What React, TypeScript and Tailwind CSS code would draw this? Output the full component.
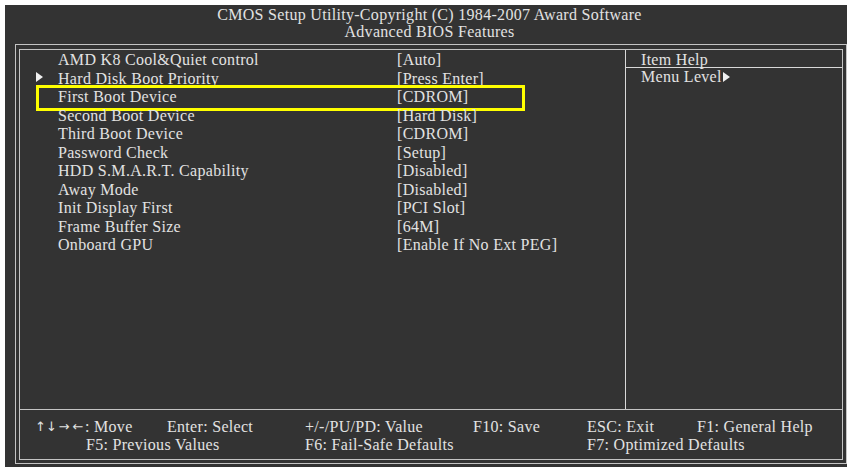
import React from "react";

const rows: { name: string; value: string; sub?: boolean; sel?: boolean }[] = [
  { name: "AMD K8 Cool&Quiet control", value: "[Auto]" },
  { name: "Hard Disk Boot Priority", value: "[Press Enter]", sub: true },
  { name: "First Boot Device", value: "[CDROM]", sel: true },
  { name: "Second Boot Device", value: "[Hard Disk]" },
  { name: "Third Boot Device", value: "[CDROM]" },
  { name: "Password Check", value: "[Setup]" },
  { name: "HDD S.M.A.R.T. Capability", value: "[Disabled]" },
  { name: "Away Mode", value: "[Disabled]" },
  { name: "Init Display First", value: "[PCI Slot]" },
  { name: "Frame Buffer Size", value: "[64M]" },
  { name: "Onboard GPU", value: "[Enable If No Ext PEG]" },
];

function Tri() {
  return (
    <svg width="7" height="10" viewBox="0 0 7 10" className="block">
      <polygon points="0,0 7,5 0,10" fill="#f0f0f0" />
    </svg>
  );
}

export default function App() {
  return (
    <div className="w-[851px] h-[467px] bg-white pt-[5px] pl-[5px] pr-[4px] font-['Liberation_Serif',serif] text-[16px] tracking-[0.3px] text-[#e2e2e2]">
      <div className="h-[462px] bg-[#333333] flex flex-col">
        <div className="pt-[1px] pl-[7px] text-center leading-[17px]">
          <div>CMOS Setup Utility-Copyright (C) 1984-2007 Award Software</div>
          <div>Advanced BIOS Features</div>
        </div>
        <div className="ml-[10px] mt-[4px] w-[832px] h-[420px] border border-[#c4c4c4] pt-[4px] pl-[3px] pr-[3px] pb-[3px]">
          <div className="h-full border border-[#c4c4c4] flex flex-col">
            <div className="h-[360px] border-b border-[#c4c4c4] flex">
              <div className="w-[606px] border-r border-[#d8d8d8] pt-[1px]">
                {rows.map((r) => (
                  <div key={r.name} className="relative flex h-[18.5px] leading-[18.5px] whitespace-nowrap">
                    <div className="w-[38px] pl-[16px] pt-[2.5px]">{r.sub ? <Tri /> : null}</div>
                    <div className="w-[339px]">{r.name}</div>
                    <div>{r.value}</div>
                    {r.sel ? (
                      <div className="absolute left-[16px] top-[-3px] w-[489px] h-[26px] border-[3px] border-[#ffff00]" />
                    ) : null}
                  </div>
                ))}
              </div>
              <div className="flex-1 flex flex-col">
                <div className="h-[18px] border-b border-[#d8d8d8] pt-[2px] pl-[15px] leading-[15px]">Item Help</div>
                <div className="pl-[15px] leading-[18.5px] flex items-center whitespace-nowrap">
                  <span>Menu Level</span>
                  <span className="ml-[1px]">
                    <Tri />
                  </span>
                </div>
              </div>
            </div>
            <div className="flex-1 pt-[8px] leading-[18px] whitespace-nowrap">
              <div className="flex pl-[15px]">
                <div className="w-[132px] flex">
                  <span className="flex items-center font-['DejaVu_Sans',sans-serif] text-[13px] tracking-normal">
                    <span className="w-[11px] text-center">↑</span>
                    <span className="w-[11px] text-center">↓</span>
                    <span className="w-[14px] text-center">→</span>
                    <span className="w-[14px] text-center">←</span>
                  </span>
                  <span>: Move</span>
                </div>
                <div className="w-[138px]">Enter: Select</div>
                <div className="w-[168px]">+/-/PU/PD: Value</div>
                <div className="w-[114px]">F10: Save</div>
                <div className="w-[110px]">ESC: Exit</div>
                <div>F1: General Help</div>
              </div>
              <div className="flex pl-[66px]">
                <div className="w-[219px]">F5: Previous Values</div>
                <div className="w-[282px]">F6: Fail-Safe Defaults</div>
                <div>F7: Optimized Defaults</div>
              </div>
            </div>
          </div>
        </div>
      </div>
    </div>
  );
}
